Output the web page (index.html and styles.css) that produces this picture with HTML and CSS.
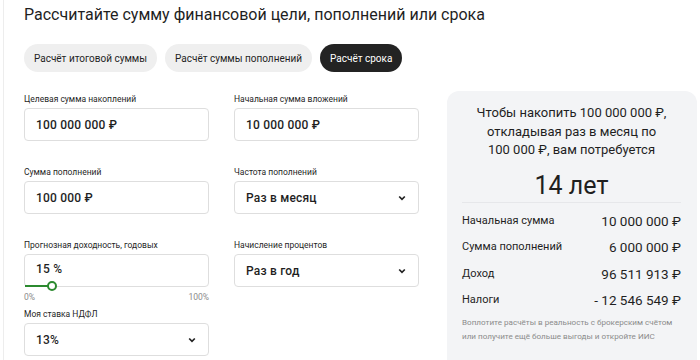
FILE: index.html
```html
<!DOCTYPE html>
<html lang="ru">
<head>
  <meta charset="UTF-8" />
  <meta name="viewport" content="width=device-width, initial-scale=1.0" />
  <title>Калькулятор финансовой цели</title>
  <link rel="stylesheet" href="styles.css">
</head>
<body>

<div class="page">
  <h2 class="title">Рассчитайте сумму финансовой цели, пополнений или срока</h2>

  <div class="tabs">
    <button class="tab">Расчёт итоговой суммы</button>
    <button class="tab">Расчёт суммы пополнений</button>
    <button class="tab active">Расчёт срока</button>
  </div>

  <div class="calc">
    <div class="form">
      <!-- Left column -->
      <div class="col">
        <div class="field">
          <label>Целевая сумма накоплений</label>
          <div class="input">100 000 000 ₽</div>
        </div>
        <div class="field">
          <label>Сумма пополнений</label>
          <div class="input">100 000 ₽</div>
        </div>
        <div class="field field-slider">
          <label>Прогнозная доходность, годовых</label>
          <div class="input">
            15 %
            <div class="slider">
              <div class="slider-fill" style="width: 15%"></div>
              <div class="slider-thumb" style="left: 15%"></div>
            </div>
          </div>
          <div class="scale"><span>0%</span><span>100%</span></div>
        </div>
        <div class="field">
          <label>Моя ставка НДФЛ</label>
          <div class="input select">13%
            <svg class="chevron" width="8" height="6" viewBox="0 0 8 6"><path d="M1.2 1.5l2.8 2.8 2.8-2.8" fill="none" stroke="#222" stroke-width="1.7"/></svg>
          </div>
        </div>
      </div>

      <!-- Right column -->
      <div class="col">
        <div class="field">
          <label>Начальная сумма вложений</label>
          <div class="input">10 000 000 ₽</div>
        </div>
        <div class="field">
          <label>Частота пополнений</label>
          <div class="input select">Раз в месяц
            <svg class="chevron" width="8" height="6" viewBox="0 0 8 6"><path d="M1.2 1.5l2.8 2.8 2.8-2.8" fill="none" stroke="#222" stroke-width="1.7"/></svg>
          </div>
        </div>
        <div class="field">
          <label>Начисление процентов</label>
          <div class="input select">Раз в год
            <svg class="chevron" width="8" height="6" viewBox="0 0 8 6"><path d="M1.2 1.5l2.8 2.8 2.8-2.8" fill="none" stroke="#222" stroke-width="1.7"/></svg>
          </div>
        </div>
      </div>
    </div>

    <div class="result">
      <p class="result-lead">Чтобы накопить 100 000 000 ₽,<br>откладывая раз в месяц по<br>100 000 ₽, вам потребуется</p>
      <div class="result-big">14 лет</div>
      <div class="result-rows">
        <div class="result-row"><span>Начальная сумма</span><b>10 000 000 ₽</b></div>
        <div class="result-row"><span>Сумма пополнений</span><b>6 000 000 ₽</b></div>
        <div class="result-row"><span>Доход</span><b>96 511 913 ₽</b></div>
        <div class="result-row"><span>Налоги</span><b>- 12 546 549 ₽</b></div>
      </div>
      <p class="result-note">Воплотите расчёты в реальность с брокерским счётом или получите ещё больше выгоды и откройте ИИС</p>
    </div>
  </div>
</div>

</body>
</html>
```

FILE: styles.css
```css
*, *::before, *::after { box-sizing: border-box; margin: 0; padding: 0; }

:root {
  --text-dark:  #1f1f1f;
  --text-muted: #8b8b8b;
  --border:     #dedede;
  --tab-bg:     #efefef;
  --card-bg:    #f3f4f6;
  --green:      #2b8a2f;
}

html, body { height: 100%; overflow: hidden; }

body {
  font-family: Roboto, 'Noto Sans', sans-serif;
  color: var(--text-dark);
  background: #fff;
}

.page {
  height: 100%;
  overflow: hidden;
  margin-left: 3px;
  border-left: 1px solid #ededed;
  padding: 3px 0 0 20px;
}

.title {
  font-size: 16px;
  font-weight: 400;
  line-height: 24px;
}

.tabs {
  display: flex;
  gap: 8px;
  margin-top: 17px;
}

.tab {
  height: 28px;
  padding: 0 10px;
  border: none;
  border-radius: 14px;
  background: var(--tab-bg);
  font-family: inherit;
  font-size: 10px;
  color: var(--text-dark);
}

.tab.active {
  background: #232323;
  color: #fff;
}

.calc {
  display: flex;
  gap: 28px;
  margin-top: 19px;
}

.form {
  display: flex;
  gap: 25px;
  padding-top: 1px;
}

.col {
  width: 185px;
  display: flex;
  flex-direction: column;
  gap: 24px;
}

.field label {
  display: block;
  font-size: 8.5px;
  line-height: 14px;
  margin-bottom: 2px;
}

.input {
  position: relative;
  height: 33px;
  border: 1px solid var(--border);
  border-radius: 4px;
  padding: 0 11px;
  display: flex;
  align-items: center;
  font-size: 12px;
  font-weight: 500;
  letter-spacing: .2px;
}

.select { justify-content: space-between; }
.chevron { margin-right: 1px; }

.field-slider .input { padding-bottom: 4px; }

.field-slider + .field { margin-top: -20px; }

.slider {
  position: absolute;
  left: 0;
  right: 0;
  bottom: -1px;
  height: 2px;
}

.slider-fill {
  height: 2px;
  background: var(--green);
}

.slider-thumb {
  position: absolute;
  top: -4px;
  width: 10px;
  height: 10px;
  margin-left: -5px;
  border: 2px solid var(--green);
  border-radius: 50%;
  background: #fff;
}

.scale {
  display: flex;
  justify-content: space-between;
  margin-top: 4px;
  font-size: 8.5px;
  line-height: 12px;
  color: var(--text-muted);
}

.result {
  width: 250px;
  height: 300px;
  background: var(--card-bg);
  border-radius: 12px;
  padding: 13px 16px 20px 15px;
}

.result-lead {
  font-size: 13px;
  line-height: 18.5px;
  text-align: center;
}

.result-big {
  margin-top: 11px;
  font-size: 25px;
  line-height: 30px;
  text-align: center;
  padding-bottom: 1px;
  border-bottom: 1px solid #e6e7ea;
}

.result-rows {
  display: flex;
  flex-direction: column;
  gap: 8.5px;
  padding-top: 9px;
}

.result-row {
  display: flex;
  justify-content: space-between;
  align-items: center;
  line-height: 18px;
}

.result-row span { font-size: 11px; }
.result-row b { font-size: 13.5px; font-weight: 400; }

.result-note {
  margin-top: 6px;
  font-size: 8.1px;
  line-height: 14px;
  color: var(--text-muted);
}
```
